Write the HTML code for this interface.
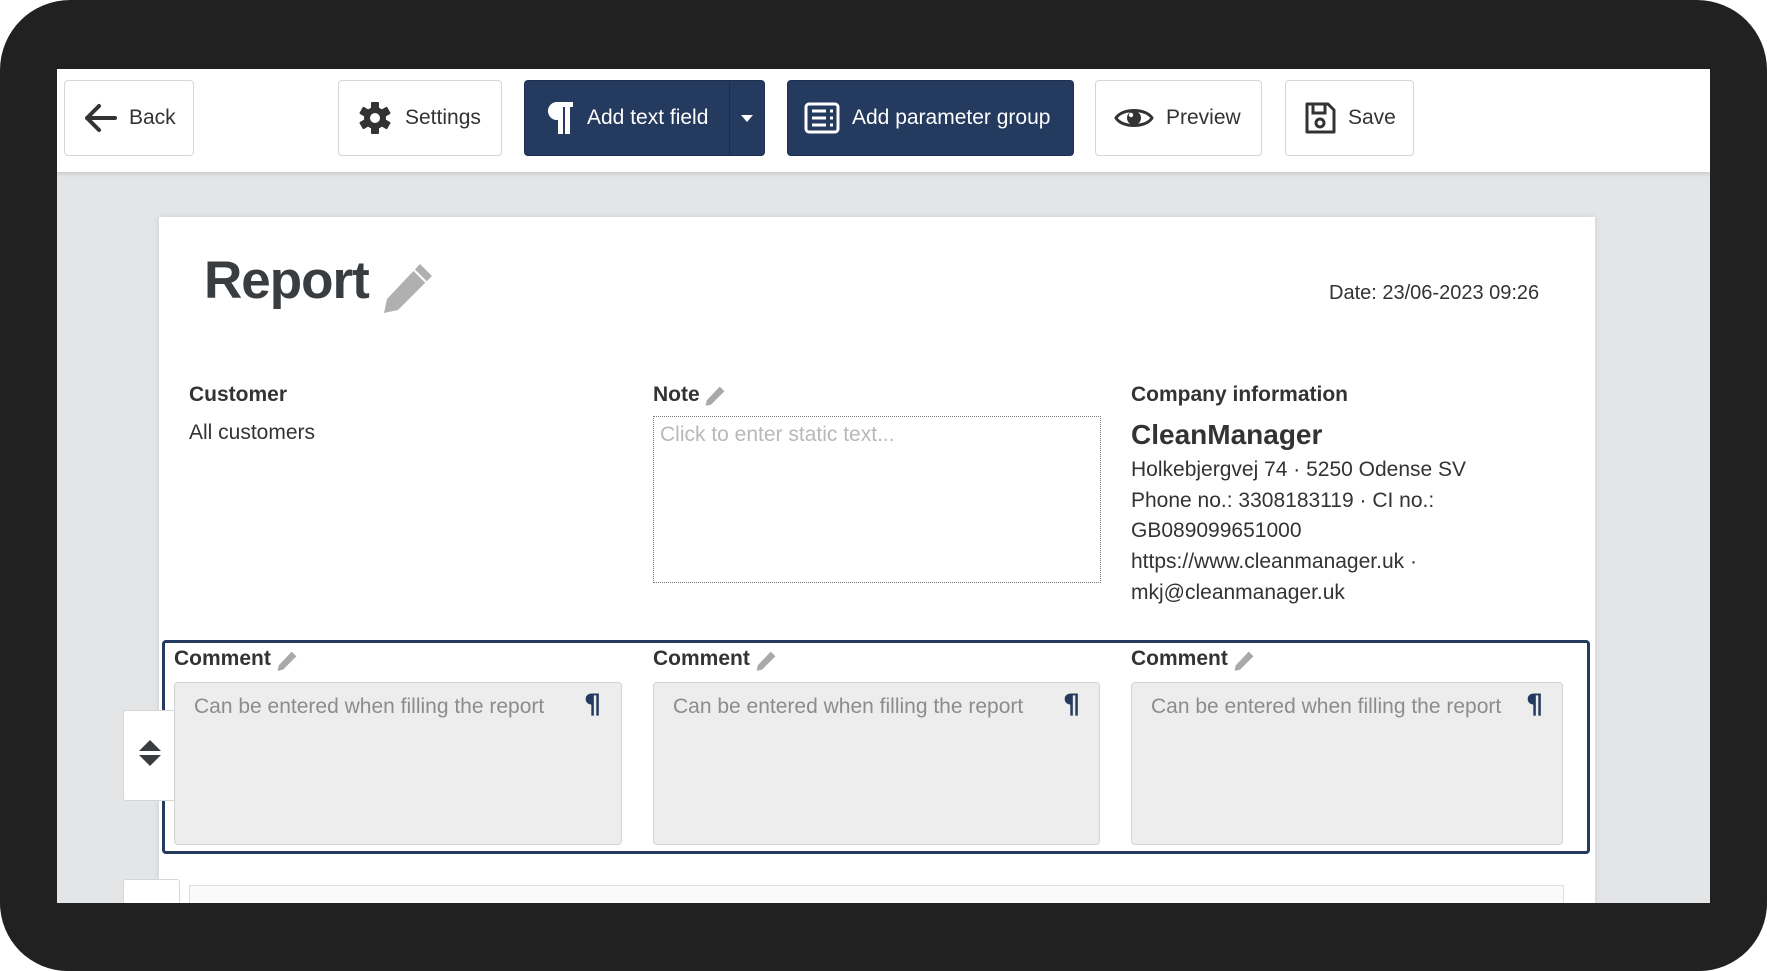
<!DOCTYPE html>
<html><head><meta charset="utf-8"><style>
*{box-sizing:border-box;margin:0;padding:0}
body{width:1767px;height:971px;background:#fff;font-family:"Liberation Sans",sans-serif;overflow:hidden;position:relative;color:#333}
.frame{position:absolute;left:0;top:0;width:1767px;height:971px;background:#222122;border-radius:70px}
.screen{position:absolute;left:57px;top:69px;width:1653px;height:834px;background:#e4e5e7;overflow:hidden}
.hdr{position:absolute;left:0;top:0;width:100%;height:103px;background:#fff;box-shadow:0 2px 4px rgba(0,0,0,.12)}
.btn{position:absolute;top:11px;height:76px;border:1px solid #d6d6d6;border-radius:4px;background:#fff;display:flex;align-items:center;font-size:21px;color:#333}
.btn.p{background:#243a5e;border-color:#1d3050;color:#fff}
.btn svg{margin-right:12px}
.paper{position:absolute;left:102px;top:148px;width:1436px;height:720px;background:#fff;box-shadow:0 0 6px rgba(0,0,0,.1)}
.a{position:absolute;white-space:nowrap}
.lbl{font-weight:bold;font-size:21px;color:#333}
.t{font-size:21px;color:#333}
.cbox{position:absolute;top:682px;height:163px;background:#ededed;border:1px solid #d3d3d3;border-radius:4px}
.ph{position:absolute;left:19px;top:12px;font-size:21px;color:#8c8c8c}
.pil{position:absolute;top:6px;font-size:27px;font-weight:bold;color:#243a5e;font-family:"DejaVu Sans",sans-serif}
</style></head><body>
<div class="frame"></div>
<div class="screen">
 <div class="paper"></div>
 <div class="hdr">
  <div class="btn" style="left:7px;width:130px;padding-left:18px"><svg width="34" height="30" viewBox="0 0 34 30"><path d="M16 3L4 15l12 12M4 15h28" stroke="#333" stroke-width="4" fill="none" stroke-linecap="round" stroke-linejoin="round"/></svg>Back</div>
  <div class="btn" style="left:281px;width:164px;padding-left:18px"><svg width="36" height="36" viewBox="0 0 36 36"><g fill="#333"><circle cx="18" cy="18" r="11"/><rect x="14" y="2" width="8" height="32" rx="1"/><rect x="14" y="2" width="8" height="32" rx="1" transform="rotate(60 18 18)"/><rect x="14" y="2" width="8" height="32" rx="1" transform="rotate(120 18 18)"/></g><circle cx="18" cy="18" r="5" fill="#fff"/></svg>Settings</div>
  <div class="btn p" style="left:467px;width:241px;padding-left:20px"><svg width="30" height="36" viewBox="0 0 30 36"><path d="M11 2h17v5h-3v27h-5V7h-2v27h-5V20A9 9 0 0 1 11 2z" fill="#fff"/></svg>Add text field<div style="position:absolute;left:204px;top:0;bottom:0;width:1px;background:#1b2e4c"></div><div style="position:absolute;left:216px;top:34px;border:6px solid transparent;border-top:7px solid #fff;border-bottom:0"></div></div>
  <div class="btn p" style="left:730px;width:287px;padding-left:16px"><svg width="36" height="32" viewBox="0 0 36 32"><rect x="2" y="2" width="32" height="28" rx="3" fill="none" stroke="#fff" stroke-width="3"/><path d="M8 9h14M8 16h14M8 23h14" stroke="#fff" stroke-width="3"/><path d="M26 9h3M26 16h3M26 23h3" stroke="#fff" stroke-width="3"/></svg>Add parameter group</div>
  <div class="btn" style="left:1038px;width:167px;padding-left:18px"><svg width="40" height="28" viewBox="0 0 40 28"><path d="M2 14C8 4 32 4 38 14C32 24 8 24 2 14z" fill="none" stroke="#333" stroke-width="3"/><circle cx="20" cy="14" r="7" fill="#333"/><circle cx="17" cy="11" r="2.2" fill="#fff"/></svg>Preview</div>
  <div class="btn" style="left:1228px;width:129px;padding-left:18px"><svg width="32" height="34" viewBox="0 0 32 34"><path d="M3 3h21l6 6v22H3z" fill="none" stroke="#333" stroke-width="3" stroke-linejoin="round"/><path d="M9 3v9h12V3" fill="none" stroke="#333" stroke-width="3"/><circle cx="16" cy="22" r="4" fill="none" stroke="#333" stroke-width="3"/></svg>Save</div>
 </div>
</div>
<div class="a" style="left:204px;top:250px;font-size:53px;font-weight:bold;color:#3a3d40;letter-spacing:-1px">Report</div>
<svg class="a" style="left:380px;top:260px" width="56" height="56" viewBox="0 0 56 56"><path d="M40 4l12 12L18 50 4 53l3-14z" fill="#b0b0b0"/><path d="M34 10l12 12" stroke="#fff" stroke-width="2"/></svg>
<div class="a t" style="left:1329px;top:282px;font-size:20px">Date: 23/06-2023 09:26</div>
<div class="a lbl" style="left:189px;top:383px">Customer</div>
<div class="a t" style="left:189px;top:421px">All customers</div>
<div class="a lbl" style="left:653px;top:383px">Note</div>
<svg class="a" style="left:704px;top:385px" width="22" height="22" viewBox="0 0 56 56"><path d="M40 4l12 12L18 50 4 53l3-14z" fill="#a9a9a9"/></svg>
<div class="a" style="left:653px;top:416px;width:448px;height:167px;border:1px dotted #777"><div style="position:absolute;left:6px;top:6px;font-size:21px;color:#b8b8b8">Click to enter static text...</div></div>
<div class="a lbl" style="left:1131px;top:383px">Company information</div>
<div class="a" style="left:1131px;top:419px;font-size:28px;font-weight:bold;color:#333">CleanManager</div>
<div class="a t" style="left:1131px;top:455px;line-height:30.7px">Holkebjergvej 74 · 5250 Odense SV<br>Phone no.: 3308183119 · CI no.:<br>GB089099651000<br>https://www.cleanmanager.uk ·<br>mkj@cleanmanager.uk</div>
<div class="a" style="left:162px;top:640px;width:1428px;height:214px;border:3px solid #243a5e;border-radius:4px"></div>
<div class="a" style="left:123px;top:710px;width:57px;height:91px;background:#fff;border:1px solid #d6d6d6;border-radius:3px"><div style="position:absolute;left:15px;top:29px;border:11px solid transparent;border-bottom:11px solid #3a3d40;border-top:0"></div><div style="position:absolute;left:15px;top:44px;border:11px solid transparent;border-top:11px solid #3a3d40;border-bottom:0"></div></div>
<div class="a lbl" style="left:174px;top:647px">Comment</div>
<div class="a lbl" style="left:653px;top:647px">Comment</div>
<div class="a lbl" style="left:1131px;top:647px">Comment</div>
<svg class="a" style="left:276px;top:650px" width="22" height="22" viewBox="0 0 56 56"><path d="M40 4l12 12L18 50 4 53l3-14z" fill="#a9a9a9"/></svg>
<svg class="a" style="left:755px;top:650px" width="22" height="22" viewBox="0 0 56 56"><path d="M40 4l12 12L18 50 4 53l3-14z" fill="#a9a9a9"/></svg>
<svg class="a" style="left:1233px;top:650px" width="22" height="22" viewBox="0 0 56 56"><path d="M40 4l12 12L18 50 4 53l3-14z" fill="#a9a9a9"/></svg>
<div class="cbox" style="left:174px;width:448px"><div class="ph">Can be entered when filling the report</div><div class="pil" style="left:409px">¶</div></div>
<div class="cbox" style="left:653px;width:447px"><div class="ph">Can be entered when filling the report</div><div class="pil" style="left:409px">¶</div></div>
<div class="cbox" style="left:1131px;width:432px"><div class="ph">Can be entered when filling the report</div><div class="pil" style="left:394px">¶</div></div>
<div class="a" style="left:123px;top:879px;width:57px;height:30px;background:#fff;border:1px solid #d6d6d6;border-radius:3px"></div>
<div class="a" style="left:189px;top:885px;width:1375px;height:20px;background:#fafafa;border:1px solid #ddd"></div>
<div class="a" style="left:0;top:903px;width:1767px;height:68px;background:#222122;border-radius:0 0 70px 70px"></div>
</body></html>
